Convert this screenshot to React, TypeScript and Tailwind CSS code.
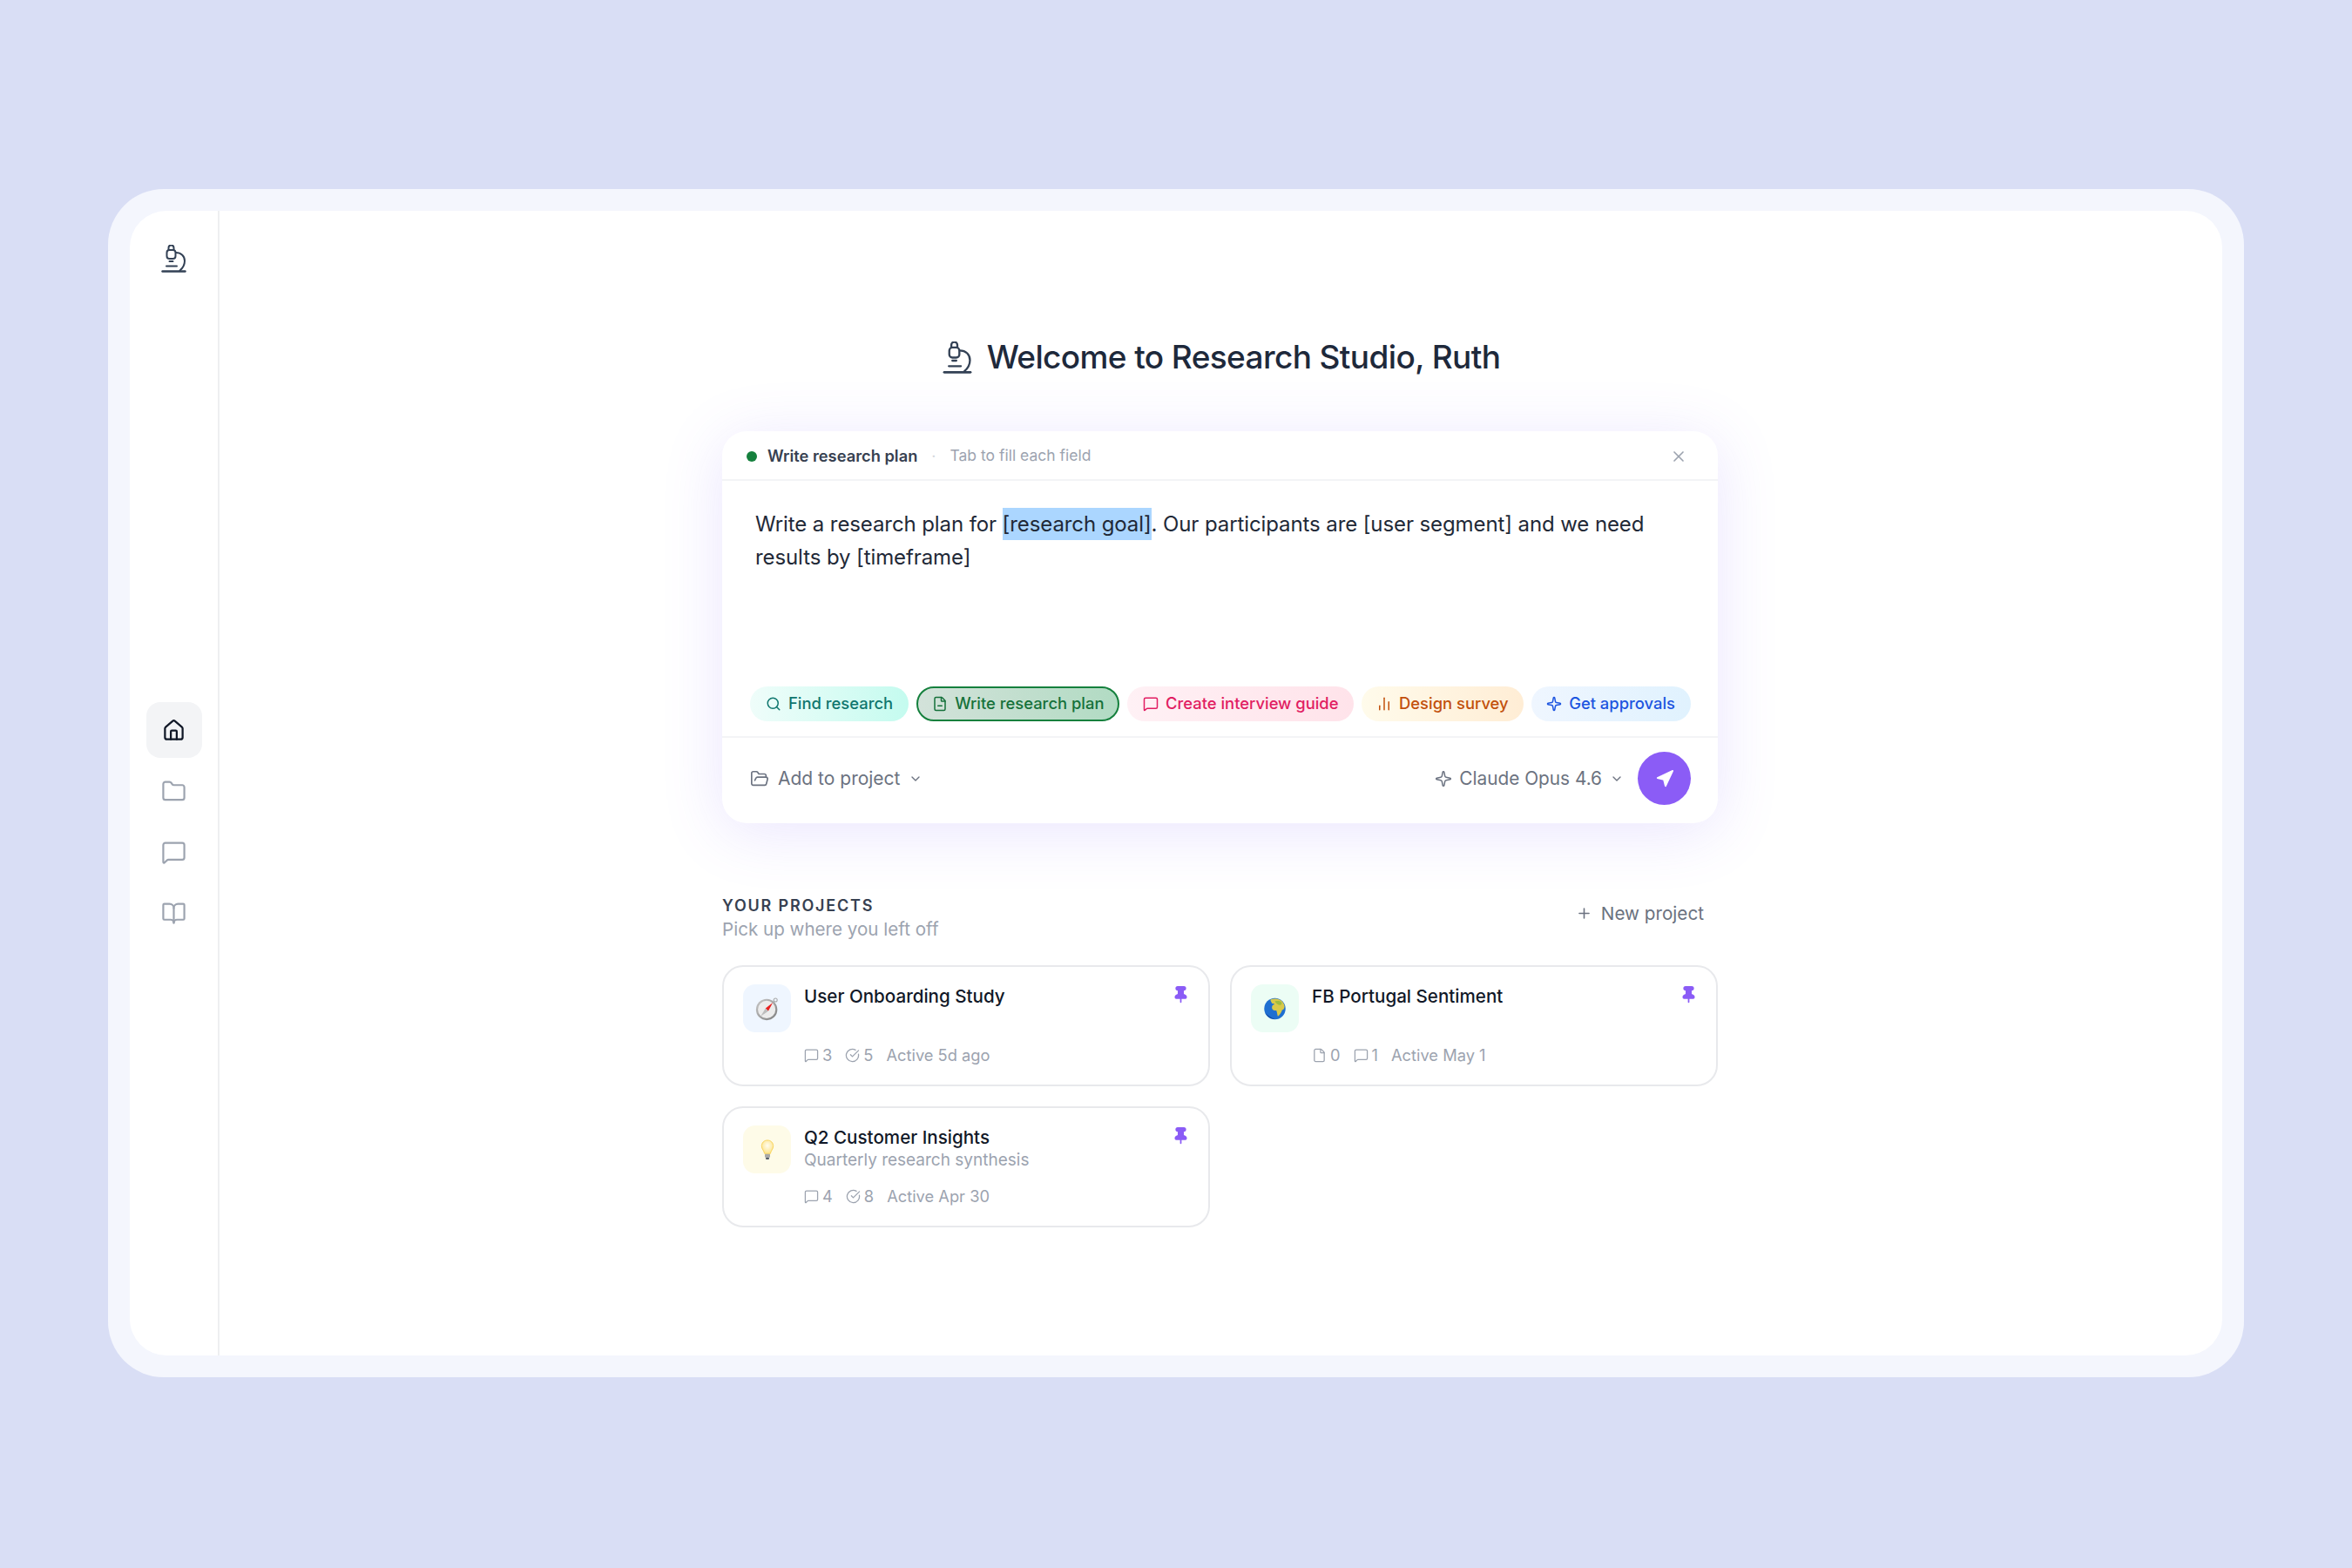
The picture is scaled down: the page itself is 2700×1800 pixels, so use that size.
import React from 'react'
import {
  BookOpen,
  ChartNoAxesColumn,
  ChevronDown,
  CircleCheckBig,
  File,
  FileMinus,
  Folder,
  FolderOpen,
  House,
  MessageSquare,
  Navigation,
  Pin,
  Plus,
  Search,
  Sparkle,
  X,
} from 'lucide-react'

const MicroscopeLogo = ({ className }: { className: string }) => (
  <svg viewBox="0 0 29 32" fill="none" stroke="currentColor" strokeWidth="2" strokeLinecap="round" strokeLinejoin="round" className={className}>
    <path d="M8.500 6V3.500a3 3 0 0 1 6 0V6" />
    <rect x="6.500" y="6" width="10" height="10" rx="3" />
    <path d="M9.500 19h4" />
    <path d="M17 9c6 0 10 4 10 9.500 0 4.500-2 8-5.500 11" />
    <path d="M6 24.500h12" />
    <path d="M1.500 30.500h26" strokeWidth="2.400" />
  </svg>
)

const Compass = () => (
  <svg viewBox="0 0 32 32" className="w-[28px] h-[28px]">
    <defs>
      <linearGradient id="compassRim" x1="0" y1="0" x2="1" y2="1">
        <stop offset="0" stopColor="#c9c9c9" />
        <stop offset="1" stopColor="#7d7d7d" />
      </linearGradient>
    </defs>
    <circle cx="26.500" cy="4.500" r="2.300" fill="none" stroke="#a8a8a8" strokeWidth="1.200" />
    <circle cx="15" cy="17" r="14" fill="url(#compassRim)" />
    <circle cx="15" cy="17" r="11.500" fill="#ececec" />
    <path d="M23 8l-6 11-3.500-3.500z" fill="#e8201f" />
    <path d="M7 26l6.500-10.500 3.500 3.500z" fill="#bdbdbd" />
  </svg>
)

const Globe = () => (
  <svg viewBox="0 0 32 32" className="w-[27px] h-[30px]">
    <circle cx="16" cy="16" r="14.500" fill="#1f6fd1" />
    <path d="M10 3.500c4-1.500 10-1.500 14 1 3 2 4 4 5 7 .5 3-1 6-3 6-1 3-3 7-6 9-1-3-1-6-2-8-3 0-6-1-6-4 0-2 1-4 3-4 1-2-2-1-3-2-1-2-2-3-2-5z" fill="#d9c94a" />
    <path d="M16 6c3-1 7-.5 9 1 1 2 0 4-2 4-3 0-5-2-7-5z" fill="#9fbb3f" />
    <path d="M3 22c3 5 8 8 13 8-5-1-9-4-13-8z" fill="#123a8a" />
  </svg>
)

const Bulb = () => (
  <svg viewBox="0 0 24 36" className="w-[16px] h-[28px]">
    <defs>
      <radialGradient id="bulbGlow" cx="0.5" cy="0.4" r="0.6">
        <stop offset="0" stopColor="#fffdf0" />
        <stop offset="1" stopColor="#fde38a" />
      </radialGradient>
    </defs>
    <path d="M12 1.500C6 1.500 2 6 2 11.500c0 5 4 7.500 5 13h10c1-5.500 5-8 5-13C22 6 18 1.500 12 1.500z" fill="url(#bulbGlow)" stroke="#f9d45c" strokeWidth="1.500" />
    <rect x="7.500" y="25" width="9" height="6" rx="1" fill="#a8a8a8" />
    <rect x="9" y="31" width="6" height="3.500" rx="1.500" fill="#555b66" />
  </svg>
)

const Stat = ({ icon, value }: { icon: React.ReactNode; value: string }) => (
  <span className="flex items-center gap-[4px]">
    {icon}
    <span>{value}</span>
  </span>
)

const ProjectCard = ({
  emoji,
  tint,
  title,
  sub,
  stats,
  active,
}: {
  emoji: React.ReactNode
  tint: string
  title: string
  sub?: string
  stats: React.ReactNode
  active: string
}) => (
  <div className="relative h-[139px] rounded-[24px] border-2 border-[#e8e9ec] bg-white pl-[22px] pr-[22px] pt-[20px] flex gap-[15px]">
    <div className={`w-[55px] h-[55px] rounded-[14px] flex items-center justify-center shrink-0 ${tint}`}>{emoji}</div>
    <div className="flex flex-col flex-1">
      <p className="text-[20.600px] leading-[28px] font-medium text-[#111827]">{title}</p>
      <p className="text-[19px] leading-[24px] text-[#9ca3af] h-[24px]">{sub}</p>
      <div className="mt-[16px] flex items-center gap-[15px] text-[18.300px] leading-[26px] text-[#9ca3af]">
        {stats}
        <span>{active}</span>
      </div>
    </div>
    <Pin className="absolute right-[21px] top-[21px] w-[21px] h-[21px] text-[#8b5cf6]" fill="currentColor" strokeWidth={2} />
  </div>
)

const chips = [
  { label: 'Find research', icon: Search, cls: 'px-[18px] bg-gradient-to-r from-[#effdfa] to-[#c4fbef] text-[#0f766e]' },
  { label: 'Write research plan', icon: FileMinus, cls: 'px-[16px] bg-gradient-to-r from-[#d3e2da] to-[#b1dbc3] text-[#15713a] border-2 border-[#15803d]' },
  { label: 'Create interview guide', icon: MessageSquare, cls: 'px-[17.500px] bg-gradient-to-r from-[#fff1f5] to-[#ffe3ea] text-[#e11d62]' },
  { label: 'Design survey', icon: ChartNoAxesColumn, cls: 'px-[17px] bg-gradient-to-r from-[#fffbeb] to-[#ffedd5] text-[#c2500c]' },
  { label: 'Get approvals', icon: Sparkle, cls: 'px-[17.500px] bg-gradient-to-r from-[#eff6ff] to-[#e0f2fe] text-[#1d55e0]' },
]

const Sidebar = () => (
  <div className="w-[103px] shrink-0 border-r-2 border-[#eeeff1] flex flex-col items-center pt-[39px]">
    <MicroscopeLogo className="w-[29px] h-[32px] text-[#334155]" />
    <div className="mt-[493px] flex flex-col gap-[6px]">
      <div className="w-[64px] h-[64px] rounded-[16px] bg-[#f3f4f6] flex items-center justify-center">
        <House className="w-[27px] h-[27px] text-[#111827]" strokeWidth={2} />
      </div>
      <div className="w-[64px] h-[64px] flex items-center justify-center">
        <Folder className="w-[29px] h-[29px] text-[#9ca3af]" strokeWidth={1.800} />
      </div>
      <div className="w-[64px] h-[64px] flex items-center justify-center">
        <MessageSquare className="w-[29px] h-[29px] text-[#9ca3af]" strokeWidth={1.800} />
      </div>
      <div className="w-[64px] h-[64px] flex items-center justify-center">
        <BookOpen className="w-[29px] h-[29px] text-[#9ca3af]" strokeWidth={1.800} />
      </div>
    </div>
  </div>
)

const Composer = () => (
  <div className="w-[1143px] h-[450px] rounded-[28px] bg-white shadow-[0_10px_70px_rgba(124,92,246,0.16)] flex flex-col">
    <div className="h-[57px] shrink-0 border-b-2 border-[#f3f4f6] pl-[28px] pr-[35px] pt-[2px] flex items-center">
      <span className="w-[12px] h-[12px] rounded-full bg-[#15803d]" />
      <span className="ml-[12px] text-[18.300px] font-semibold text-[#374151]">Write research plan</span>
      <span className="ml-[16px] text-[#d1d5db] text-[18px]">·</span>
      <span className="ml-[16px] text-[17.500px] text-[#9ca3af]">Tab to fill each field</span>
      <X className="ml-auto w-[20px] h-[20px] text-[#9ca3af]" strokeWidth={2} />
    </div>
    <div className="h-[236px] shrink-0 pl-[38px] pr-[50px] pt-[31px] text-[24px] tracking-[-0.1px] leading-[38px] text-[#1f2937]">
      Write a research plan for <span className="bg-[#abd6ff] py-[4px]">[research goal]</span>. Our participants are [user segment] and we need results by [timeframe]
    </div>
    <div className="flex items-center gap-[9px] pl-[32px] pb-[17px] border-b-2 border-[#f3f4f6]">
      {chips.map((c) => (
        <span key={c.label} className={`h-[40px] rounded-full flex items-center gap-[8px] text-[18.400px] font-medium ${c.cls}`}>
          <c.icon className="w-[18px] h-[18px]" strokeWidth={2} />
          {c.label}
        </span>
      ))}
    </div>
    <div className="flex-1 flex items-center pl-[32px] pr-[31px] pb-[5px]">
      <FolderOpen className="w-[22px] h-[22px] text-[#6b7280]" strokeWidth={1.800} />
      <span className="ml-[10px] text-[21px] text-[#6b7280]">Add to project</span>
      <ChevronDown className="ml-[10px] w-[16px] h-[16px] text-[#6b7280]" strokeWidth={2} />
      <Sparkle className="ml-auto w-[20px] h-[20px] text-[#6b7280]" strokeWidth={1.800} />
      <span className="ml-[8px] text-[20.800px] text-[#6b7280]">Claude Opus 4.6</span>
      <ChevronDown className="ml-[9px] w-[16px] h-[16px] text-[#6b7280]" strokeWidth={2} />
      <button className="ml-[16px] w-[61px] h-[61px] rounded-full bg-[#8b5cf6] flex items-center justify-center">
        <Navigation className="w-[22px] h-[22px] text-white" fill="currentColor" strokeWidth={2} />
      </button>
    </div>
  </div>
)

const statIcon = 'w-[17px] h-[17px]'

const Projects = () => (
  <div className="w-[1143px] mt-[82px]">
    <div className="flex items-start justify-between">
      <div>
        <p className="text-[18px] leading-[26px] font-semibold tracking-[0.1em] text-[#374151]">YOUR PROJECTS</p>
        <p className="text-[20.600px] leading-[28px] text-[#9ca3af]">Pick up where you left off</p>
      </div>
      <div className="flex items-center gap-[10px] text-[20.700px] text-[#6b7280] pr-[16px] pt-[6px]">
        <Plus className="w-[19px] h-[19px]" strokeWidth={2} />
        New project
      </div>
    </div>
    <div className="mt-[27px] grid grid-cols-2 gap-x-[23px] gap-y-[23px]">
      <ProjectCard
        emoji={<Compass />}
        tint="bg-[#eff6ff]"
        title="User Onboarding Study"
        active="Active 5d ago"
        stats={
          <>
            <Stat icon={<MessageSquare className={statIcon} strokeWidth={1.800} />} value="3" />
            <Stat icon={<CircleCheckBig className={statIcon} strokeWidth={1.800} />} value="5" />
          </>
        }
      />
      <ProjectCard
        emoji={<Globe />}
        tint="bg-[#ecfdf5]"
        title="FB Portugal Sentiment"
        active="Active May 1"
        stats={
          <>
            <Stat icon={<File className={statIcon} strokeWidth={1.800} />} value="0" />
            <Stat icon={<MessageSquare className={statIcon} strokeWidth={1.800} />} value="1" />
          </>
        }
      />
      <ProjectCard
        emoji={<Bulb />}
        tint="bg-[#fefbe8]"
        title="Q2 Customer Insights"
        sub="Quarterly research synthesis"
        active="Active Apr 30"
        stats={
          <>
            <Stat icon={<MessageSquare className={statIcon} strokeWidth={1.800} />} value="4" />
            <Stat icon={<CircleCheckBig className={statIcon} strokeWidth={1.800} />} value="8" />
          </>
        }
      />
    </div>
  </div>
)

export default function App() {
  return (
    <div className="w-[2700px] h-[1800px] bg-[#d9def5] pt-[217px] pl-[124px] font-['Inter',sans-serif]">
      <div className="w-[2452px] h-[1364px] rounded-[64px] bg-[#f4f6fd] p-[25px]">
        <div className="w-full h-full rounded-[42px] bg-white flex overflow-hidden">
          <Sidebar />
          <div className="flex-1 flex flex-col items-center pt-[145px] pr-[2px]">
            <div className="flex items-center gap-[17px] h-[46px] pl-[3px]">
              <MicroscopeLogo className="w-[34px] h-[37px] text-[#334155]" />
              <h1 className="text-[37px] font-medium text-[#1e293b] tracking-[-0.0166em]">Welcome to Research Studio, Ruth</h1>
            </div>
            <div className="mt-[62px]">
              <Composer />
            </div>
            <Projects />
          </div>
        </div>
      </div>
    </div>
  )
}
